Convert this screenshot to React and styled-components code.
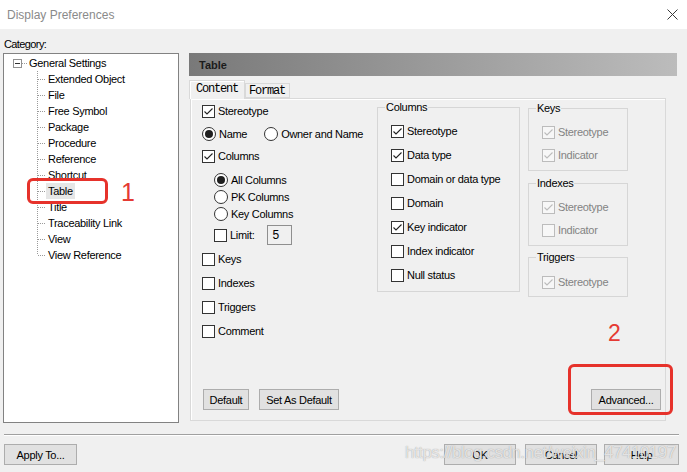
import React from "react";
import styled, { createGlobalStyle } from "styled-components";

const GlobalStyle = createGlobalStyle`
  html, body { margin: 0; padding: 0; }
  body {
    background: #f0f0f0;
    font-family: "Liberation Sans", Arial, sans-serif;
    font-size: 11px;
    letter-spacing: -0.3px;
    color: #000;
  }
  * { box-sizing: border-box; }
`;

const Window = styled.div`
  position: relative;
  width: 687px;
  height: 472px;
  overflow: hidden;
  display: flex;
  flex-direction: column;
  background: #f0f0f0;
`;

const TitleBar = styled.div`
  height: 29px;
  background: #fff;
  display: flex;
  align-items: center;
  justify-content: space-between;
  padding: 0 9px 0 7px;
`;

const Title = styled.span`
  font-size: 12px;
  letter-spacing: 0;
  color: #8a8a8a;
  line-height: 14px;
`;

const Main = styled.div`
  display: flex;
  padding-left: 3px;
`;

const Sidebar = styled.div`
  width: 176px;
  display: flex;
  flex-direction: column;
`;

const CategoryLabel = styled.div`
  height: 24px;
  padding: 8px 0 0 1px;
  line-height: 14px;
  letter-spacing: -0.6px;
`;

const TreeBox = styled.div`
  height: 370px;
  background: #fff;
  border: 1px solid #828282;
  padding-top: 1px;
`;

const TreeRow = styled.div`
  display: flex;
  align-items: center;
  height: 16px;
  padding-left: ${(p) => p.$indent || 0}px;
`;

const TreeChildren = styled.div`
  padding-left: 33px;
`;

const TreeLabel = styled.span`
  height: 16px;
  line-height: 16px;
  padding: 0 2px;
  background: ${(p) => (p.$selected ? "#e6e6e6" : "transparent")};
`;

const Expander = styled.span`
  width: 9px;
  height: 9px;
  border: 1px solid #919191;
  background: #fff;
  display: flex;
  align-items: center;
  justify-content: center;
  &::before {
    content: "";
    width: 5px;
    height: 1px;
    background: #333;
  }
`;

const RightCol = styled.div`
  width: 488px;
  margin-left: 10px;
  padding-top: 24px;
  display: flex;
  flex-direction: column;
`;

const Header = styled.div`
  height: 23px;
  background: linear-gradient(to right, #797979, #bcbcbc);
  display: flex;
  align-items: center;
  padding-left: 10px;
  font-weight: bold;
  letter-spacing: 0;
  color: #1b1b1b;
`;

const TabStrip = styled.div`
  display: flex;
  align-items: flex-end;
  height: 18px;
  margin-top: 4px;
`;

const Tab = styled.div`
  position: relative;
  z-index: ${(p) => (p.$active ? 1 : 0)};
  width: ${(p) => p.$w}px;
  height: ${(p) => (p.$active ? 19 : 15)}px;
  margin-bottom: ${(p) => (p.$active ? -1 : 0)}px;
  border: 1px solid #d9d9d9;
  border-bottom: ${(p) => (p.$active ? "none" : "1px solid #d9d9d9")};
  box-shadow: ${(p) => (p.$active ? "inset 1px 1px 0 #fff" : "none")};
  background: #f0f0f0;
  display: flex;
  align-items: center;
  padding-left: ${(p) => p.$pl}px;
  font-family: "Liberation Mono", "Courier New", monospace;
  font-size: 12px;
  letter-spacing: -1.2px;
  padding-bottom: ${(p) => (p.$active ? 2 : 0)}px;
`;

const Panel = styled.div`
  margin-left: 1px;
  width: 476px;
  height: 323px;
  border: 1px solid #d9d9d9;
  box-shadow: inset 1px 1px 0 #fff;
  display: flex;
  flex-direction: column;
  padding: 1px 4px 10px 11px;
`;

const PanelBody = styled.div`
  display: flex;
  align-items: flex-start;
  flex: 1;
`;

const LeftCol = styled.div`
  width: 175px;
  margin-top: 3px;
  display: flex;
  flex-direction: column;
`;

const Option = styled.div`
  display: flex;
  align-items: center;
  gap: 3px;
  height: ${(p) => p.$h || 16}px;
  margin-top: ${(p) => p.$mt || 0}px;
  padding-left: ${(p) => p.$indent || 0}px;
  color: ${(p) => (p.$disabled ? "#838383" : "#000")};
  white-space: nowrap;
`;

const Box = styled.span`
  flex: none;
  width: 13px;
  height: 13px;
  border: 1px solid ${(p) => (p.$disabled ? "#bcbcbc" : "#333")};
  background: ${(p) => (p.$disabled ? "#f7f7f7" : "#fff")};
  display: flex;
  align-items: center;
  justify-content: center;
`;

const Round = styled.span`
  flex: none;
  width: 14px;
  height: 14px;
  border-radius: 50%;
  border: 1px solid #333;
  background: #fff;
  display: flex;
  align-items: center;
  justify-content: center;
`;

const Dot = styled.span`
  width: 8px;
  height: 8px;
  border-radius: 50%;
  background: #1f1f1f;
`;

const RadioPair = styled.div`
  display: flex;
  align-items: center;
  gap: 17px;
  margin-top: ${(p) => p.$mt || 0}px;
`;

const LimitField = styled.span`
  width: 25px;
  height: 20px;
  margin-left: 10px;
  border: 1px solid #8f8f8f;
  background: #f0f0f0;
  display: flex;
  align-items: center;
  padding-left: 4px;
  font-size: 12px;
`;

const Group = styled.fieldset`
  margin: ${(p) => p.$mt || 0}px 0 0 0;
  width: ${(p) => p.$w}px;
  min-width: 0;
  padding: 0 7px ${(p) => p.$pb}px;
  border: 1px solid #d6d6d6;
  legend {
    padding: 0 1px;
    line-height: 14px;
    height: 14px;
  }
`;

const GroupRows = styled.div`
  margin: ${(p) => p.$first}px 0 0 6px;
  display: flex;
  flex-direction: column;
  gap: ${(p) => p.$gap}px;
`;

const RightGroups = styled.div`
  width: 100px;
  margin: 1px 0 0 8px;
  display: flex;
  flex-direction: column;
`;

const ButtonRow = styled.div`
  display: flex;
  align-items: center;
  padding-left: 1px;
  gap: 10px;
`;

const Button = styled.button`
  width: ${(p) => p.$w}px;
  height: 21px;
  margin-left: ${(p) => (p.$push ? "auto" : "0")};
  padding: 0;
  border: 1px solid #adadad;
  background: #e1e1e1;
  font-family: inherit;
  font-size: 11px;
  letter-spacing: -0.3px;
  color: #000;
`;

const Separator = styled.div`
  height: 1px;
  margin: 11px 8px 0 4px;
  background: #a0a0a0;
  box-shadow: 0 1px 0 #fff;
`;

const FooterBar = styled.div`
  display: flex;
  align-items: center;
  margin-top: 9px;
  padding: 0 8px 0 4px;
`;

const FooterRight = styled.div`
  display: flex;
  margin-left: auto;
  gap: ${(p) => p.$gap}px;
`;

const HelpWrap = styled.div`
  margin-left: 7px;
  display: flex;
`;

/* red markup drawn over the dialog */
const Callout = styled.div`
  position: absolute;
  left: ${(p) => p.$x}px;
  top: ${(p) => p.$y}px;
  width: ${(p) => p.$w}px;
  height: ${(p) => p.$h}px;
  border: 3px solid #e6322b;
  border-radius: 6px;
  pointer-events: none;
`;

const CalloutNumber = styled.div`
  position: absolute;
  left: ${(p) => p.$x}px;
  top: ${(p) => p.$y}px;
  font-size: ${(p) => p.$size}px;
  line-height: 1;
  letter-spacing: 0;
  color: #e53a33;
`;

const Watermark = styled.div`
  position: absolute;
  left: 405px;
  top: 444px;
  font-size: 17px;
  line-height: 1;
  letter-spacing: -0.5px;
  color: rgba(250, 250, 250, 0.75);
  text-shadow: 0 0 1px rgba(110, 110, 110, 0.7);
  white-space: nowrap;
  pointer-events: none;
`;

const Connector = ({ last }) => (
  <svg width="9" height="16" style={{ flex: "none" }}>
    <line x1="0.5" y1="0" x2="0.5" y2={last ? 8 : 16} stroke="#9a9a9a" strokeDasharray="1 1" />
    <line x1="1" y1="8.5" x2="9" y2="8.5" stroke="#9a9a9a" strokeDasharray="1 1" />
  </svg>
);

const CheckMark = ({ color }) => (
  <svg width="11" height="11" viewBox="0 0 11 11">
    <path d="M1.5 5.5 L4 8 L9.5 2.5" fill="none" stroke={color} strokeWidth="1.1" />
  </svg>
);

const Check = ({ checked, disabled, children, ...rest }) => (
  <Option $disabled={disabled} {...rest}>
    <Box $disabled={disabled}>{checked && <CheckMark color={disabled ? "#bcbcbc" : "#222"} />}</Box>
    <span>{children}</span>
  </Option>
);

const Radio = ({ selected, children, ...rest }) => (
  <Option {...rest}>
    <Round>{selected && <Dot />}</Round>
    <span>{children}</span>
  </Option>
);

const treeItems = [
  "Extended Object",
  "File",
  "Free Symbol",
  "Package",
  "Procedure",
  "Reference",
  "Shortcut",
  "Table",
  "Title",
  "Traceability Link",
  "View",
  "View Reference",
];

const columnOptions = [
  ["Stereotype", true],
  ["Data type", true],
  ["Domain or data type", false],
  ["Domain", false],
  ["Key indicator", true],
  ["Index indicator", false],
  ["Null status", false],
];

export default function App() {
  return (
    <>
      <GlobalStyle />
      <Window>
        <TitleBar>
          <Title>Display Preferences</Title>
          <svg width="11" height="11" viewBox="0 0 11 11">
            <path d="M0.5 0.5 L10.5 10.5 M10.5 0.5 L0.5 10.5" stroke="#3a3a3a" strokeWidth="1" />
          </svg>
        </TitleBar>

        <Main>
          <Sidebar>
            <CategoryLabel>Category:</CategoryLabel>
            <TreeBox>
              <TreeRow $indent={9}>
                <Expander />
                <svg width="5" height="16" style={{ flex: "none" }}>
                  <line x1="0" y1="8.5" x2="5" y2="8.5" stroke="#9a9a9a" strokeDasharray="1 1" />
                </svg>
                <TreeLabel>General Settings</TreeLabel>
              </TreeRow>
              <TreeChildren>
                {treeItems.map((item, i) => (
                  <TreeRow key={item}>
                    <Connector last={i === treeItems.length - 1} />
                    <TreeLabel $selected={item === "Table"}>{item}</TreeLabel>
                  </TreeRow>
                ))}
              </TreeChildren>
            </TreeBox>
          </Sidebar>

          <RightCol>
            <Header>Table</Header>
            <TabStrip>
              <Tab $active $w={56} $pl={6}>Content</Tab>
              <Tab $w={45} $pl={3}>Format</Tab>
            </TabStrip>
            <Panel>
              <PanelBody>
                <LeftCol>
                  <Check checked>Stereotype</Check>
                  <RadioPair $mt={7}>
                    <Radio selected>Name</Radio>
                    <Radio>Owner and Name</Radio>
                  </RadioPair>
                  <Check checked $mt={6}>Columns</Check>
                  <Radio selected $indent={12} $mt={8}>All Columns</Radio>
                  <Radio $indent={12} $mt={1}>PK Columns</Radio>
                  <Radio $indent={12} $mt={1}>Key Columns</Radio>
                  <Option $indent={12} $mt={3} $h={20}>
                    <Box />
                    <span>Limit:</span>
                    <LimitField>5</LimitField>
                  </Option>
                  <Check $mt={6}>Keys</Check>
                  <Check $mt={8}>Indexes</Check>
                  <Check $mt={8}>Triggers</Check>
                  <Check $mt={8}>Comment</Check>
                </LeftCol>

                <Group $w={143} $pb={8}>
                  <legend>Columns</legend>
                  <GroupRows $first={9} $gap={8}>
                    {columnOptions.map(([label, on]) => (
                      <Check key={label} checked={on}>{label}</Check>
                    ))}
                  </GroupRows>
                </Group>

                <RightGroups>
                  <Group $w={100} $pb={7}>
                    <legend>Keys</legend>
                    <GroupRows $first={9} $gap={7}>
                      <Check checked disabled>Stereotype</Check>
                      <Check checked disabled>Indicator</Check>
                    </GroupRows>
                  </Group>
                  <Group $w={100} $pb={7} $mt={5}>
                    <legend>Indexes</legend>
                    <GroupRows $first={9} $gap={7}>
                      <Check checked disabled>Stereotype</Check>
                      <Check disabled>Indicator</Check>
                    </GroupRows>
                  </Group>
                  <Group $w={100} $pb={6} $mt={4}>
                    <legend>Triggers</legend>
                    <GroupRows $first={10} $gap={7}>
                      <Check checked disabled>Stereotype</Check>
                    </GroupRows>
                  </Group>
                </RightGroups>
              </PanelBody>

              <ButtonRow>
                <Button $w={46}>Default</Button>
                <Button $w={80}>Set As Default</Button>
                <Button $w={70} $push>Advanced...</Button>
              </ButtonRow>
            </Panel>
          </RightCol>
        </Main>

        <Separator />
        <FooterBar>
          <Button $w={73}>Apply To...</Button>
          <FooterRight $gap={9}>
            <Button $w={72}>OK</Button>
            <Button $w={72}>Cancel</Button>
          </FooterRight>
          <HelpWrap>
            <Button $w={75}>Help</Button>
          </HelpWrap>
        </FooterBar>

        <Callout $x={27} $y={178} $w={81} $h={26} />
        <CalloutNumber $x={121} $y={180} $size={25}>1</CalloutNumber>
        <CalloutNumber $x={608} $y={322} $size={23}>2</CalloutNumber>
        <Callout $x={568} $y={364} $w={105} $h={51} />
        <Watermark>https://blog.csdn.net/weixin_47410197</Watermark>
      </Window>
    </>
  );
}
